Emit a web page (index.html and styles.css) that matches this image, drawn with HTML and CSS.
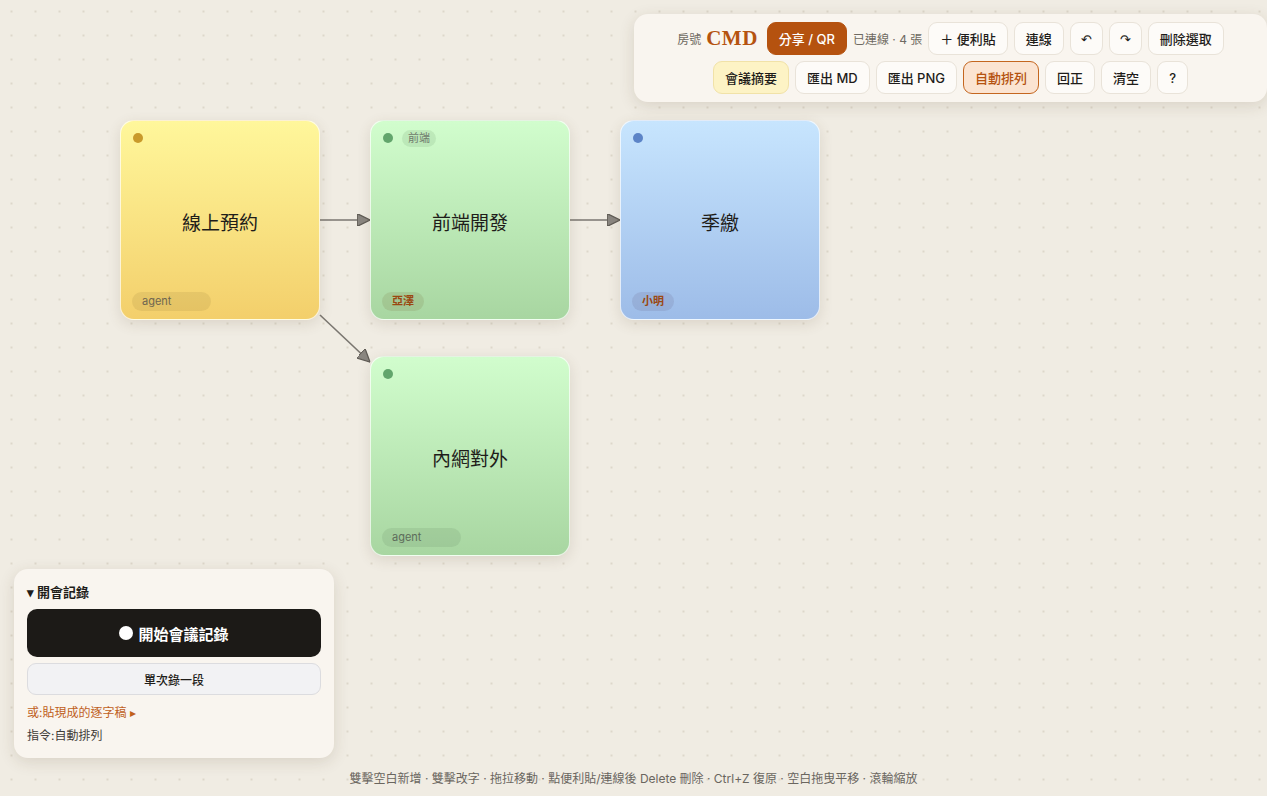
FILE: index.html
```html
<!DOCTYPE html>
<html lang="zh-Hant">
<head>
    <meta charset="UTF-8">
    <meta name="viewport" content="width=device-width, initial-scale=1.0">
    <title>便利貼白板</title>
    <link rel="stylesheet" href="styles.css">
</head>
<body>

    <div class="board">
        <svg class="links" width="1267" height="796">
            <defs>
                <marker id="arrow" viewBox="0 0 10 10" refX="10" refY="5" markerWidth="8" markerHeight="8" orient="auto">
                    <path d="M0,0 L10,5 L0,10 Z" fill="#8a8680" stroke="#5f5b55" stroke-width="1"></path>
                </marker>
            </defs>
            <line x1="320" y1="220" x2="370" y2="220" marker-end="url(#arrow)"></line>
            <line x1="570" y1="220" x2="620" y2="220" marker-end="url(#arrow)"></line>
            <line x1="320" y1="315" x2="370" y2="362" marker-end="url(#arrow)"></line>
        </svg>

        <div class="note yellow" style="left: 120px; top: 120px;">
            <div class="note-top"><span class="dot"></span></div>
            <div class="note-text">線上預約</div>
            <div class="note-foot"><span class="owner empty">agent</span></div>
        </div>

        <div class="note green" style="left: 370px; top: 120px;">
            <div class="note-top"><span class="dot"></span><span class="tag">前端</span></div>
            <div class="note-text">前端開發</div>
            <div class="note-foot"><span class="owner">亞澤</span></div>
        </div>

        <div class="note blue" style="left: 620px; top: 120px;">
            <div class="note-top"><span class="dot"></span></div>
            <div class="note-text">季繳</div>
            <div class="note-foot"><span class="owner">小明</span></div>
        </div>

        <div class="note green" style="left: 370px; top: 356px;">
            <div class="note-top"><span class="dot"></span></div>
            <div class="note-text">內網對外</div>
            <div class="note-foot"><span class="owner empty">agent</span></div>
        </div>
    </div>

    <div class="toolbar">
        <div class="tool-row">
            <span class="room-label">房號</span>
            <span class="room-code">CMD</span>
            <button class="btn primary">分享 / QR</button>
            <span class="status">已連線 · 4 張</span>
            <button class="btn">＋ 便利貼</button>
            <button class="btn">連線</button>
            <button class="btn icon">↶</button>
            <button class="btn icon">↷</button>
            <button class="btn">刪除選取</button>
        </div>
        <div class="tool-row">
            <button class="btn summary">會議摘要</button>
            <button class="btn">匯出 MD</button>
            <button class="btn">匯出 PNG</button>
            <button class="btn active">自動排列</button>
            <button class="btn">回正</button>
            <button class="btn">清空</button>
            <button class="btn icon">?</button>
        </div>
    </div>

    <div class="meeting">
        <div class="meeting-title">▾ 開會記錄</div>
        <button class="rec-btn"><span class="rec-dot"></span>開始會議記錄</button>
        <button class="once-btn">單次錄一段</button>
        <div class="paste-link">或:貼現成的逐字稿 ▸</div>
        <div class="command">指令:自動排列</div>
    </div>

    <div class="hint">雙擊空白新增 · 雙擊改字 · 拖拉移動 · 點便利貼/連線後 Delete 刪除 · Ctrl+Z 復原 · 空白拖曳平移 · 滾輪縮放</div>

</body>
</html>
```

FILE: styles.css
```css
body {
    margin: 0;
    height: 100vh;
    overflow: hidden;
    font-family: 'Inter', 'Noto Sans CJK TC', sans-serif;
    color: #1f1d1a;
    background-color: #f0ece3;
    background-image: radial-gradient(circle, #ddd7cb 1px, transparent 1.3px);
    background-size: 24px 24px;
    background-position: -0.5px -0.5px;
}
.board {
    position: relative;
    width: 100%;
    height: 100%;
}
.links {
    position: absolute;
    left: 0;
    top: 0;
}
.links line {
    stroke: #7a7670;
    stroke-width: 1.6;
}
.note {
    position: absolute;
    width: 200px;
    height: 200px;
    box-sizing: border-box;
    border-radius: 14px;
    border: 1px solid rgba(255, 255, 255, 0.7);
    box-shadow: 0px 4px 14px rgba(90, 70, 40, 0.14);
    display: flex;
    flex-direction: column;
    padding: 8px 11px;
}
.yellow { background: linear-gradient(180deg, #fff79b, #f3cf6b); }
.green { background: linear-gradient(180deg, #d1fdcd, #a8d6a1); }
.blue { background: linear-gradient(180deg, #c7e5fe, #9dbce8); }
.note-top {
    display: flex;
    align-items: center;
    gap: 9px;
    height: 18px;
}
.dot {
    width: 10px;
    height: 10px;
    border-radius: 50%;
    margin-left: 1px;
}
.yellow .dot { background: #c99a2b; }
.green .dot { background: #62a56c; }
.blue .dot { background: #5c84c7; }
.tag {
    font-size: 11px;
    color: #6f7a6c;
    background: rgba(80, 120, 80, 0.13);
    border-radius: 9px;
    padding: 1px 6px;
    line-height: 15px;
}
.note-text {
    flex: 1;
    display: flex;
    align-items: center;
    justify-content: center;
    font-size: 19px;
    font-weight: 400;
    color: #1f1d1a;
    padding-top: 4px;
}
.note-foot {
    height: 20px;
    display: flex;
    align-items: center;
}
.owner {
    font-size: 11px;
    font-weight: 700;
    color: #9b4812;
    background: rgba(110, 90, 40, 0.14);
    border-radius: 10px;
    padding: 0 10px;
    line-height: 19px;
}
.owner.empty {
    width: 59px;
    font-weight: 400;
    color: #6e6650;
    background: rgba(120, 100, 40, 0.12);
}
.green .owner.empty { color: #5d6c5a; background: rgba(70, 110, 70, 0.12); }
.blue .owner { background: rgba(90, 80, 110, 0.14); }
.toolbar {
    position: absolute;
    top: 14px;
    left: 634px;
    width: 633px;
    box-sizing: border-box;
    padding: 8px 10px;
    background: #f9f5ef;
    border-radius: 14px;
    box-shadow: 0px 4px 16px rgba(80, 60, 30, 0.14);
    display: flex;
    flex-direction: column;
    gap: 6px;
}
.tool-row {
    display: flex;
    justify-content: center;
    align-items: center;
    gap: 6px;
}
.room-label {
    font-size: 12px;
    color: #6f6a62;
    margin-right: -1px;
}
.room-code {
    font-family: 'Liberation Serif', serif;
    font-weight: 700;
    font-size: 21px;
    color: #b5530f;
    letter-spacing: 0.5px;
    margin-right: 3px;
}
.status {
    font-size: 12px;
    color: #6f6a62;
}
.btn {
    font-family: 'Inter', 'Noto Sans CJK TC', sans-serif;
    font-size: 13px;
    font-weight: 500;
    color: #1f1d1a;
    background: #fdfbf8;
    border: 1px solid #e9e3d9;
    border-radius: 9px;
    height: 33px;
    padding: 0 11px;
    cursor: pointer;
}
.btn.icon {
    min-width: 31px;
    padding: 0 10px;
}
.btn.primary {
    background: #b5520f;
    border-color: #b5520f;
    color: white;
    padding: 0 11px;
}
.btn.summary {
    background: #fdf3c5;
    border-color: #f1e2a8;
}
.btn.active {
    background: #fbe4d2;
    border-color: #c4661f;
    color: #b5520f;
}
.meeting {
    position: absolute;
    left: 14px;
    bottom: 38px;
    width: 320px;
    box-sizing: border-box;
    padding: 13px 13px 13px;
    background: #f9f5ef;
    border-radius: 14px;
    box-shadow: 0px 4px 16px rgba(80, 60, 30, 0.14);
    display: flex;
    flex-direction: column;
}
.meeting-title {
    font-size: 13px;
    font-weight: 700;
    line-height: 20px;
    margin-bottom: 7px;
}
.rec-btn {
    height: 48px;
    border: none;
    border-radius: 10px;
    background: #1c1a17;
    color: white;
    font-family: 'Inter', 'Noto Sans CJK TC', sans-serif;
    font-size: 15px;
    font-weight: 700;
    display: flex;
    align-items: center;
    justify-content: center;
    gap: 5px;
}
.rec-dot {
    width: 14px;
    height: 14px;
    border-radius: 50%;
    background: white;
}
.once-btn {
    margin-top: 6px;
    height: 32px;
    border: 1px solid #dcdcdf;
    border-radius: 9px;
    background: #f2f2f4;
    font-family: 'Inter', 'Noto Sans CJK TC', sans-serif;
    font-size: 12px;
    font-weight: 500;
    color: #1f1d1a;
}
.paste-link {
    margin-top: 9px;
    font-size: 12px;
    color: #c0601c;
    line-height: 18px;
}
.command {
    margin-top: 5px;
    font-size: 12px;
    color: #3f3c38;
    line-height: 18px;
}
.hint {
    position: absolute;
    left: 0;
    right: 0;
    bottom: 10px;
    text-align: center;
    font-size: 12px;
    color: #6a665f;
}
```
